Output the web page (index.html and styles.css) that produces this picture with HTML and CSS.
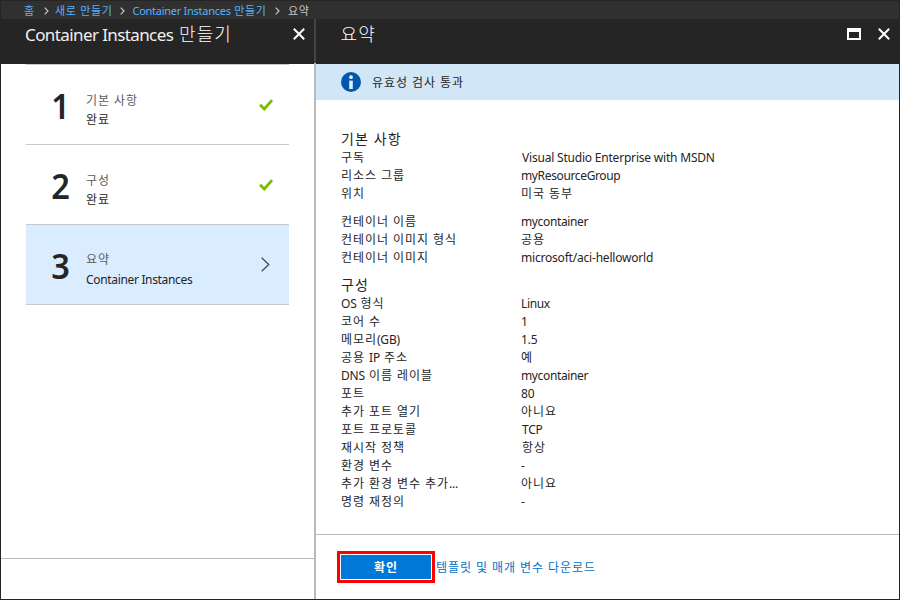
FILE: index.html
```html
<!DOCTYPE html>
<html lang="ko">
<head>
<meta charset="utf-8">
<title>Container Instances 만들기</title>
<link rel="stylesheet" href="styles.css">
</head>
<body>
<div class="portal">
  <nav class="crumbs">
    <a class="c1">홈</a>
    <svg class="sep" viewBox="0 0 5 8"><path d="M.7.7 4 4 .7 7.3"/></svg>
    <a class="c2">새로 만들기</a>
    <svg class="sep" viewBox="0 0 5 8"><path d="M.7.7 4 4 .7 7.3"/></svg>
    <a class="c3"><span class="en">Container Instances</span> 만들기</a>
    <svg class="sep" viewBox="0 0 5 8"><path d="M.7.7 4 4 .7 7.3"/></svg>
    <span class="c4">요약</span>
  </nav>
  <div class="blades">
    <section class="blade create">
      <header class="head">
        <h1><span class="en">Container Instances</span> 만들기</h1>
        <svg class="close" viewBox="0 0 12 12"><path d="M.8.8 11.2 11.2M11.2.8.8 11.2"/></svg>
      </header>
      <div class="steps">
        <div class="step">
          <span class="num">1</span>
          <div class="label"><span class="name">기본 사항</span><span>완료</span></div>
          <svg class="check" viewBox="0 0 14 12"><path d="M1 5.7 5.3 10 13 1.2"/></svg>
        </div>
        <div class="step">
          <span class="num">2</span>
          <div class="label"><span class="name">구성</span><span>완료</span></div>
          <svg class="check" viewBox="0 0 14 12"><path d="M1 5.7 5.3 10 13 1.2"/></svg>
        </div>
        <div class="step active">
          <span class="num">3</span>
          <div class="label"><span class="name">요약</span><span class="en">Container Instances</span></div>
          <svg class="chev" viewBox="0 0 9 15"><path d="M.7.7 7.8 7.5.7 14.3"/></svg>
        </div>
      </div>
      <footer class="foot"></footer>
    </section>
    <section class="blade summary">
      <header class="head">
        <h1>요약</h1>
        <svg class="max" viewBox="0 0 14 12"><path fill-rule="evenodd" d="M0 0h14v12H0zM2 4v6h10V4z"/></svg>
        <svg class="close" viewBox="0 0 12 12"><path d="M.8.8 11.2 11.2M11.2.8.8 11.2"/></svg>
      </header>
      <div class="notice">
        <svg class="info" viewBox="0 0 20 20"><circle cx="10" cy="10" r="10"/><path d="M8.2 8.6h3.6V17H8.2z"/><circle class="dot" cx="10" cy="5.2" r="1.9"/></svg>
        <span>유효성 검사 통과</span>
      </div>
      <div class="body">
        <h2>기본 사항</h2>
        <dl class="rows">
          <dt>구독</dt><dd class="en in">Visual Studio Enterprise with MSDN</dd>
          <dt>리소스 그룹</dt><dd class="en tight">myResourceGroup</dd>
          <dt>위치</dt><dd>미국 동부</dd>
        </dl>
        <dl class="rows second">
          <dt>컨테이너 이름</dt><dd class="en tight">mycontainer</dd>
          <dt>컨테이너 이미지 형식</dt><dd>공용</dd>
          <dt>컨테이너 이미지</dt><dd class="en">microsoft/aci-helloworld</dd>
        </dl>
        <h2>구성</h2>
        <dl class="rows">
          <dt><span class="en">OS</span> 형식</dt><dd class="en tight">Linux</dd>
          <dt>코어 수</dt><dd class="en">1</dd>
          <dt>메모리<span class="en">(GB)</span></dt><dd class="en">1.5</dd>
          <dt>공용 <span class="en">IP</span> 주소</dt><dd>예</dd>
          <dt><span class="en">DNS</span> 이름 레이블</dt><dd class="en tight">mycontainer</dd>
          <dt>포트</dt><dd class="en">80</dd>
          <dt>추가 포트 열기</dt><dd>아니요</dd>
          <dt>포트 프로토콜</dt><dd class="en in">TCP</dd>
          <dt>재시작 정책</dt><dd class="in">항상</dd>
          <dt>환경 변수</dt><dd class="en">-</dd>
          <dt>추가 환경 변수 추가<span class="en">...</span></dt><dd>아니요</dd>
          <dt>명령 재정의</dt><dd class="en">-</dd>
        </dl>
      </div>
      <footer class="foot">
        <div class="mark"><button>확인</button></div>
        <a class="download">템플릿 및 매개 변수 다운로드</a>
      </footer>
    </section>
  </div>
</div>
</body>
</html>
```
FILE: styles.css
```css
* { box-sizing: border-box; }
body, h1, h2, dl, dd { margin: 0; }
body {
  font: 12px/18px "Noto Sans", "Noto Sans CJK KR", sans-serif;
  letter-spacing: 0.94px;
  color: #252525;
  white-space: nowrap;
}
.en { letter-spacing: -0.2px; }
.en.tight { letter-spacing: -0.36px; }
svg { display: block; flex: none; }
.portal {
  width: 900px; height: 600px;
  display: flex; flex-direction: column;
  border: 1px solid #252525;
  background: #fff;
  overflow: hidden;
}
.crumbs {
  height: 18px; flex: none;
  display: flex; align-items: center;
  padding-left: 23px;
  background: #303030;
  color: #c8c8c8;
  font-size: 11px;
  line-height: 18px;
  letter-spacing: 0.7px;
}
.crumbs a, .crumbs span { padding-top: 1px; }
.crumbs a { color: #55b3ff; }
.crumbs .en { letter-spacing: -0.27px; }
.c1 { width: 20px; }
.c2 { width: 65px; }
.c3 { width: 142px; }
.sep { width: 5px; height: 8px; margin-right: 6px; margin-top: 2px; fill: none; stroke: #c8c8c8; stroke-width: 1.2; }
.c2 + .sep { margin-right: 7.5px; }
.c3 + .sep { margin-right: 8.5px; }
.blades { flex: 1; display: flex; min-height: 0; }
.blade { display: flex; flex-direction: column; }
.create { width: 313px; }
.summary { flex: 1; border-left: 2px solid #bababa; border-image: linear-gradient(#444 45px, #bababa 45px) 1; border-width: 0 0 0 2px; }
.head {
  height: 45px; flex: none;
  display: flex; align-items: flex-start;
  background: #252525; color: #fff;
  padding: 9px 9px 0 24px;
}
.summary .head { padding-left: 24.5px; }
.head h1 { flex: 1; font-size: 18px; line-height: 13px; font-weight: 300; letter-spacing: 1.1px; }
.head h1 .en { font-size: 17px; font-weight: 400; letter-spacing: -0.6px; color: #f0f0f0; }
.close { width: 12px; height: 12px; fill: none; stroke: #fff; stroke-width: 2; }
.max { width: 14px; height: 12px; fill: #fff; margin-right: 17px; }
.steps { flex: 1; padding: 0 25px; }
.step {
  height: 80px; display: flex; align-items: center;
  border-top: 1px solid #c8c8c8;
  padding-left: 24px;
}
.step.active { height: 81px; border-bottom: 1px solid #c8c8c8; background: #daecff; }
.num { width: 36px; font-size: 35px; line-height: 40px; font-weight: 600; letter-spacing: 0; margin-top: 3px; transform: scaleX(.93); transform-origin: 45% 50%; }
.label { flex: 1; display: flex; flex-direction: column; line-height: 19px; padding-top: 10px; }
.name { color: #5c5c5c; }
.label .en { padding-top: 1px; letter-spacing: -0.33px; }
.check { width: 14px; height: 12px; margin-right: 16px; fill: none; stroke: #7fba00; stroke-width: 2.8; }
.chev { width: 9px; height: 15px; margin-right: 19px; fill: none; stroke: #444; stroke-width: 1.2; }
.foot { flex: none; border-top: 1px solid #bababa; height: 41px; }
.notice { height: 36px; flex: none; display: flex; align-items: center; gap: 11px; padding-left: 25px; background: #d1e6f7; }
.notice span { padding-top: 2px; }
.info { width: 20px; height: 20px; fill: #0058ad; }
.info path, .info .dot { fill: #e4f1fb; }
.body { flex: 1; padding: 30px 0 0 25px; }
.body h2 { font-size: 14px; height: 19px; line-height: 17px; font-weight: 400; letter-spacing: 1.1px; }
.rows { display: grid; grid-template-columns: 180px 1fr; grid-auto-rows: 18px; }
.rows.second { margin: 10px 0 9px; }
.rows .in { padding-left: 1px; }
.summary .foot { height: 65px; display: flex; align-items: center; padding-left: 21px; gap: 1px; }
.mark { border: 3px solid #f00; padding: 1px; background: #fff; }
button {
  display: block; width: 90px; height: 24px; padding: 1px 0 0; border: 0;
  background: #0078d7; color: #fff;
  font: 700 12px/23px "Noto Sans", "Noto Sans CJK KR", sans-serif;
  letter-spacing: 0.9px;
}
.download { color: #0072c6; padding-top: 2px; }
```
